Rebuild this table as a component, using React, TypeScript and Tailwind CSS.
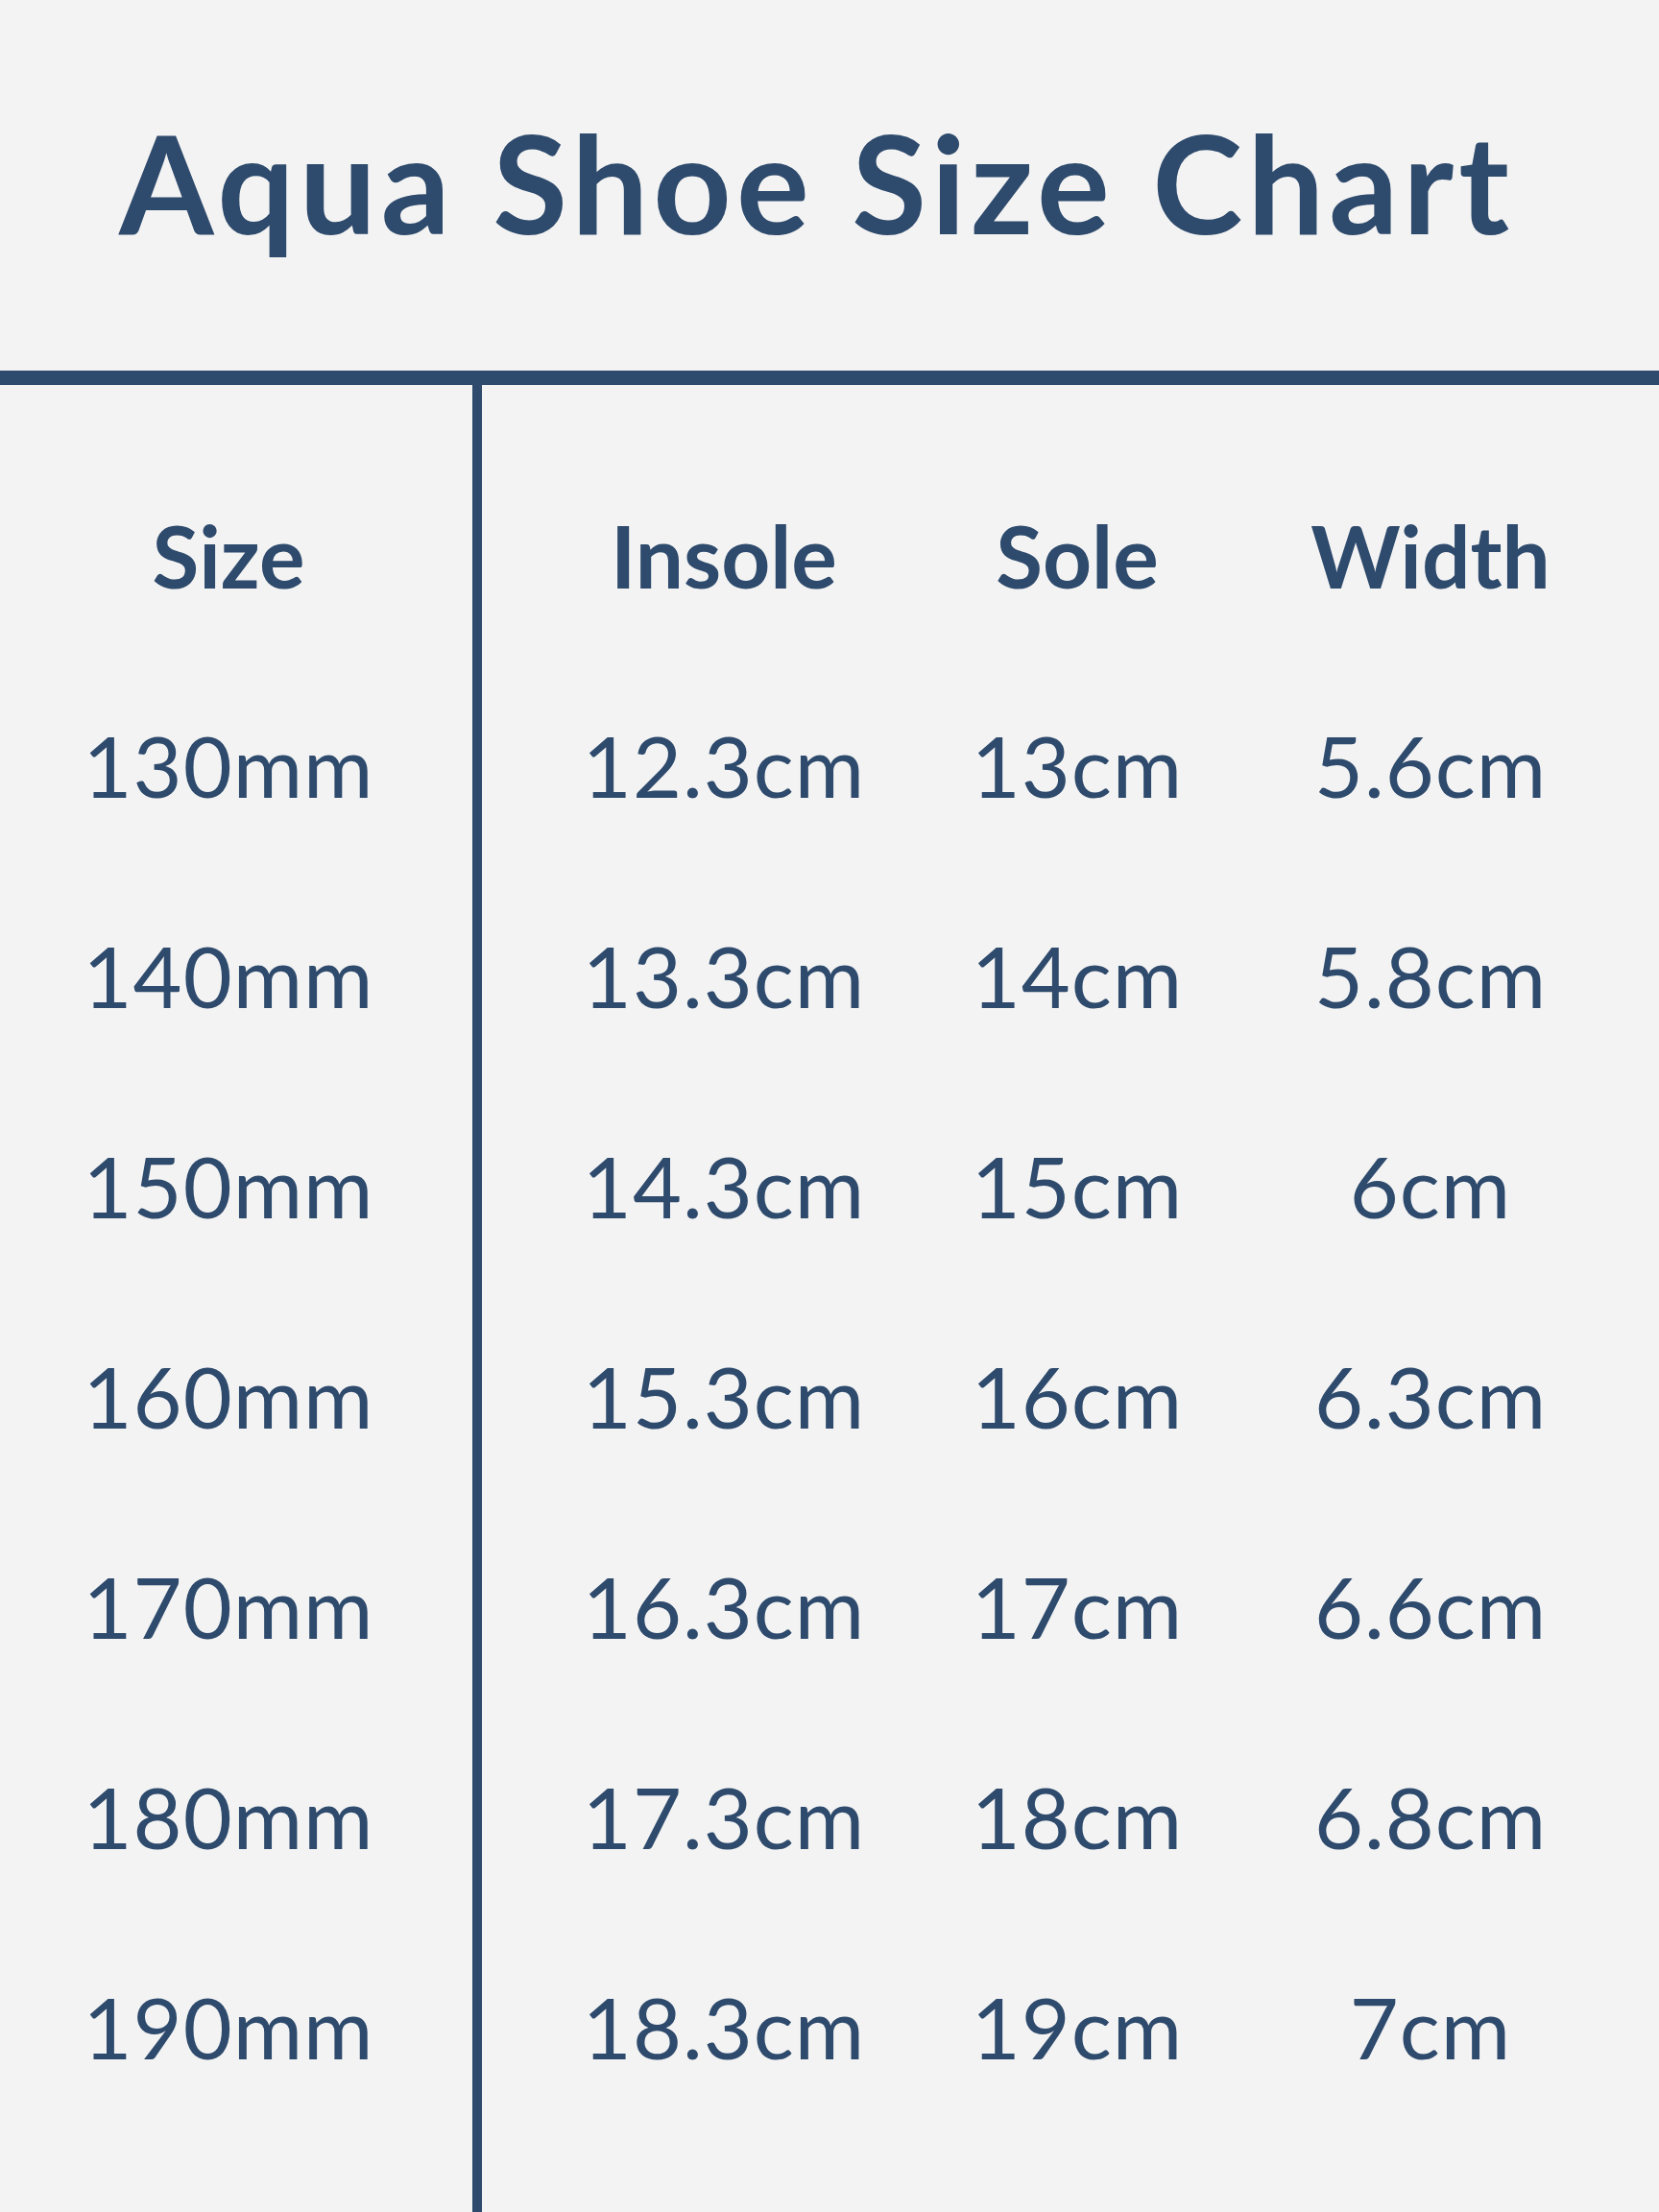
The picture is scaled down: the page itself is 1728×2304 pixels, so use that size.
const sizes = [
  { size: "130mm", insole: "12.3cm", sole: "13cm", width: "5.6cm" },
  { size: "140mm", insole: "13.3cm", sole: "14cm", width: "5.8cm" },
  { size: "150mm", insole: "14.3cm", sole: "15cm", width: "6cm" },
  { size: "160mm", insole: "15.3cm", sole: "16cm", width: "6.3cm" },
  { size: "170mm", insole: "16.3cm", sole: "17cm", width: "6.6cm" },
  { size: "180mm", insole: "17.3cm", sole: "18cm", width: "6.8cm" },
  { size: "190mm", insole: "18.3cm", sole: "19cm", width: "7cm" },
];

const App = () => {
  return (
    <div className="w-[1728px] h-[2304px] bg-[#f3f3f3] text-[#2e4a6c] font-['Lato',sans-serif] flex flex-col overflow-hidden">
      <header className="h-[386px] pt-[118px] pl-[124px]">
        <h1 className="text-[142px] font-bold leading-none tracking-[5px]">Aqua Shoe Size Chart</h1>
      </header>
      <div className="h-[15px] bg-[#2e4a6c]" />

      <div className="flex flex-1">
        <div className="w-[502px] border-r-[10px] border-[#2e4a6c] pt-[68px] pr-[16px] flex flex-col text-center">
          <div className="h-[219px] leading-[219px] text-[89px] font-bold">Size</div>
          {sizes.map((row) => (
            <div key={row.size} className="h-[219px] leading-[219px] text-[88px] tracking-[1px]">
              {row.size}
            </div>
          ))}
        </div>

        <div className="flex-1 pt-[68px] pl-[68px] pr-[54px] flex flex-col text-center">
          <div className="grid grid-cols-3 h-[219px] leading-[219px] text-[89px] font-bold">
            <div>Insole</div>
            <div>Sole</div>
            <div>Width</div>
          </div>
          {sizes.map((row) => (
            <div key={row.size} className="grid grid-cols-3 h-[219px] leading-[219px] text-[88px] tracking-[1px]">
              <div>{row.insole}</div>
              <div>{row.sole}</div>
              <div>{row.width}</div>
            </div>
          ))}
        </div>
      </div>
    </div>
  );
};

export default App;
